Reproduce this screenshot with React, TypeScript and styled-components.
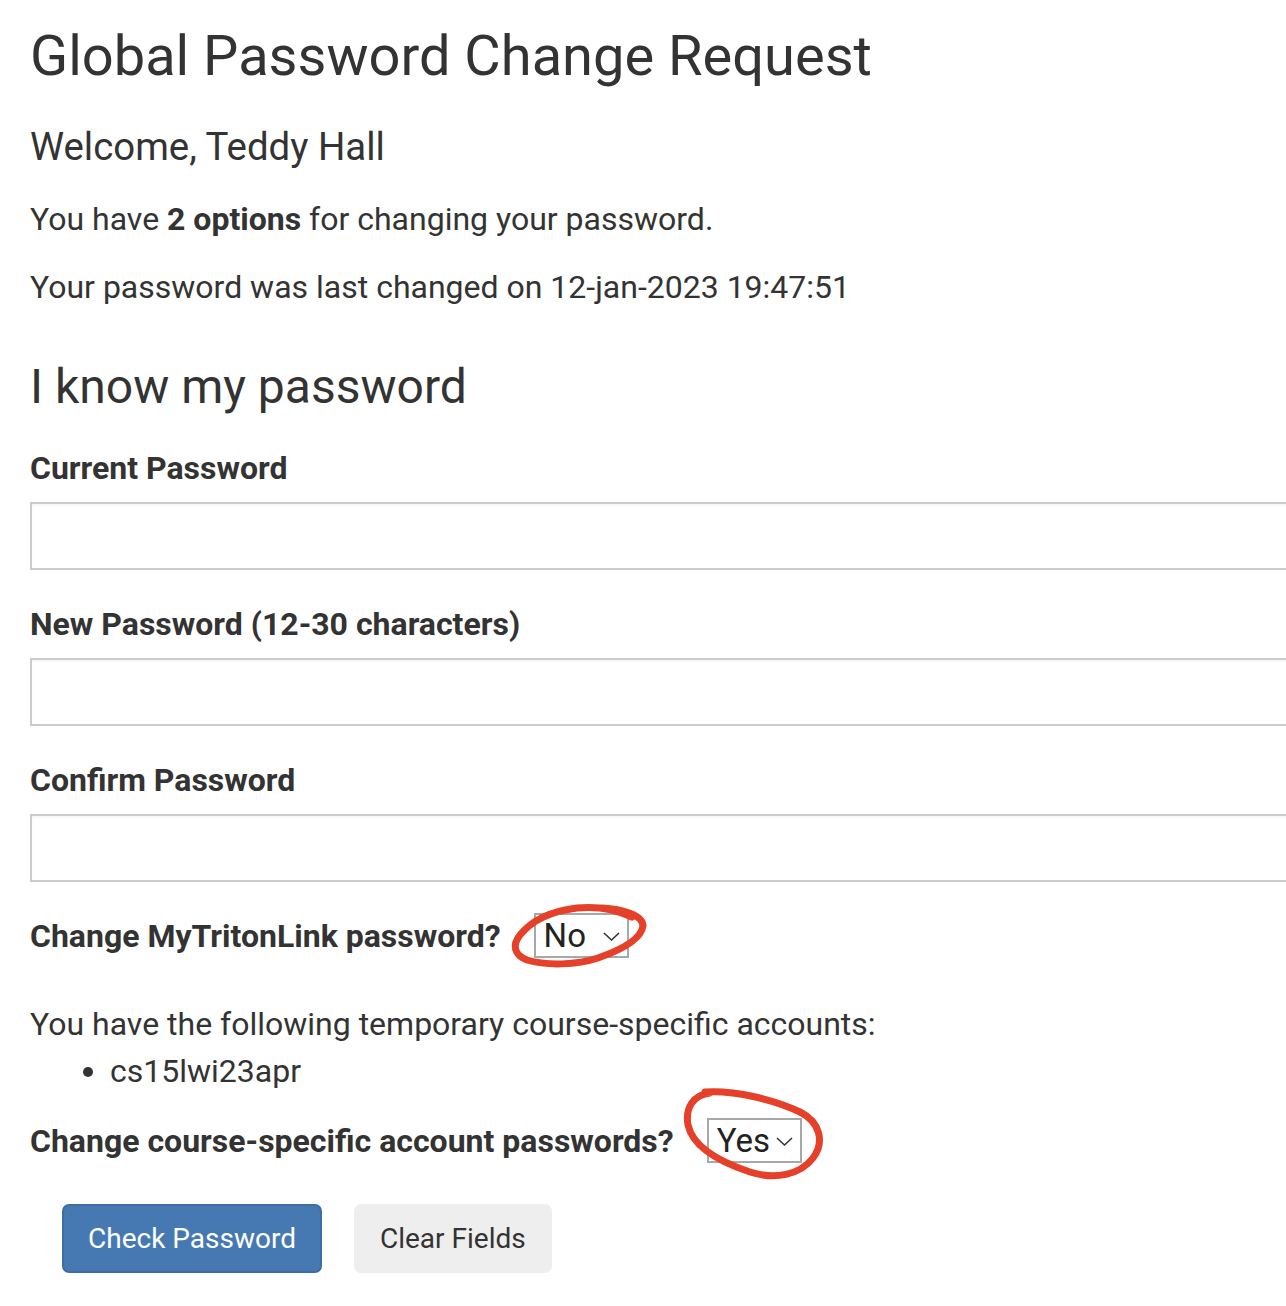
import React from "react"
import styled, { createGlobalStyle } from "styled-components"

const GlobalStyle = createGlobalStyle`
  html, body {
    margin: 0;
    padding: 0;
    background: #fff;
    overflow-x: hidden;
  }
  body {
    font-family: Roboto, "Liberation Sans", sans-serif;
    color: #333;
  }
`

const Page = styled.div`
  padding: 21px 0 40px 30px;
`

const Title = styled.h1`
  margin: 0;
  font-size: 56px;
  line-height: 70px;
  font-weight: 400;
`

const Welcome = styled.h2`
  margin: 32px 0 0;
  font-size: 38.4px;
  line-height: 48px;
  font-weight: 400;
`

const Text = styled.p<{ $top: number }>`
  margin: ${(p) => p.$top}px 0 0;
  font-size: 32px;
  line-height: 38px;
`

const Section = styled.h2`
  margin: 52px 0 0;
  font-size: 48px;
  line-height: 58px;
  font-weight: 400;
`

const Field = styled.div<{ $top: number }>`
  margin-top: ${(p) => p.$top}px;
`

const Label = styled.label`
  display: block;
  font-size: 32px;
  line-height: 38px;
  font-weight: 700;
`

const Input = styled.input`
  display: block;
  box-sizing: border-box;
  margin-top: 15px;
  width: calc(100% + 30px);
  height: 68px;
  border: 2px solid #ccc;
  box-shadow: inset 0 2px 2px rgba(0, 0, 0, 0.04);
  background: #fff;
  font-size: 30px;
  padding: 0 14px;
  outline: none;
`

const SelectRow = styled.div<{ $top: number }>`
  display: flex;
  align-items: center;
  gap: 33px;
  margin-top: ${(p) => p.$top}px;
`

const RowLabel = styled.span`
  font-size: 32px;
  line-height: 38px;
  font-weight: 700;
`

const SelectWrap = styled.div`
  position: relative;
`

const Select = styled.div<{ $w: number }>`
  box-sizing: border-box;
  width: ${(p) => p.$w}px;
  height: 45px;
  border: 2px solid #a8a8a8;
  display: flex;
  align-items: center;
  justify-content: space-between;
  padding: 0 7px 0 8px;
  font-size: 33px;
  color: #222;
  background: #fff;
`

const Chevron = styled.svg`
  width: 17px;
  height: 9px;
  margin-top: 1px;
`

const Mark = styled.svg<{ $l: number; $t: number; $w: number; $h: number }>`
  position: absolute;
  left: ${(p) => p.$l}px;
  top: ${(p) => p.$t}px;
  width: ${(p) => p.$w}px;
  height: ${(p) => p.$h}px;
  overflow: visible;
  pointer-events: none;
`

const List = styled.ul`
  margin: 9px 0 0;
  padding-left: 80px;
  font-size: 32px;
  line-height: 38px;
`

const Buttons = styled.div`
  display: flex;
  gap: 32px;
  margin: 41px 0 0 32px;
`

const Button = styled.button<{ $primary?: boolean }>`
  box-sizing: border-box;
  height: 69px;
  padding: 0 24px;
  border-radius: 7px;
  font-family: Roboto, "Liberation Sans", sans-serif;
  font-size: 28px;
  cursor: pointer;
  border: 2px solid ${(p) => (p.$primary ? "#3d6da4" : "#eee")};
  background: ${(p) => (p.$primary ? "#4679b2" : "#eee")};
  color: ${(p) => (p.$primary ? "#fff" : "#333")};
`

const ChevronIcon = () => (
  <Chevron viewBox="0 0 17 9">
    <path d="M1 1 L8.5 8 L16 1" fill="none" stroke="#333" strokeWidth="1.5" />
  </Chevron>
)

const Dropdown = ({ value, width, mark }: { value: string; width: number; mark: React.ReactNode }) => (
  <SelectWrap>
    <Select $w={width}>
      <span>{value}</span>
      <ChevronIcon />
    </Select>
    {mark}
  </SelectWrap>
)

const App = () => {
  return (
    <>
      <GlobalStyle />
      <Page>
        <Title>Global Password Change Request</Title>
        <Welcome>Welcome, Teddy Hall</Welcome>
        <Text $top={29}>
          You have <b>2 options</b> for changing your password.
        </Text>
        <Text $top={30}>Your password was last changed on 12-jan-2023 19:47:51</Text>

        <Section>I know my password</Section>
        <Field $top={33}>
          <Label>Current Password</Label>
          <Input type="password" />
        </Field>
        <Field $top={35}>
          <Label>New Password (12-30 characters)</Label>
          <Input type="password" />
        </Field>
        <Field $top={35}>
          <Label>Confirm Password</Label>
          <Input type="password" />
        </Field>

        <SelectRow $top={31}>
          <RowLabel>Change MyTritonLink password?</RowLabel>
          <Dropdown
            value="No"
            width={95}
            mark={
              <Mark $l={-32} $t={-18} $w={150} $h={85} viewBox="0 0 150 85">
                <path
                  d="M100 13 C120 14 141 20 141 31 C139 45 116 56 96 63 C75 70 45 71 25 65 C12 60 10 50 18 40 C30 25 50 16 75 13 C95 11 115 15 130 22"
                  fill="none"
                  stroke="#e5402a"
                  strokeWidth="7"
                  strokeLinecap="round"
                />
              </Mark>
            }
          />
        </SelectRow>

        <Text $top={47}>You have the following temporary course-specific accounts:</Text>
        <List>
          <li>cs15lwi23apr</li>
        </List>

        <SelectRow $top={28}>
          <RowLabel>Change course-specific account passwords?</RowLabel>
          <Dropdown
            value="Yes"
            width={95}
            mark={
              <Mark $l={-32} $t={-38} $w={155} $h={105} viewBox="0 0 155 105">
                <path
                  d="M30 12 C60 10 100 20 125 32 C145 42 150 62 138 78 C125 95 100 100 75 92 C45 82 18 68 13 45 C10 28 18 15 35 13"
                  fill="none"
                  stroke="#e5402a"
                  strokeWidth="7"
                  strokeLinecap="round"
                />
              </Mark>
            }
          />
        </SelectRow>

        <Buttons>
          <Button $primary>Check Password</Button>
          <Button>Clear Fields</Button>
        </Buttons>
      </Page>
    </>
  )
}

export default App
